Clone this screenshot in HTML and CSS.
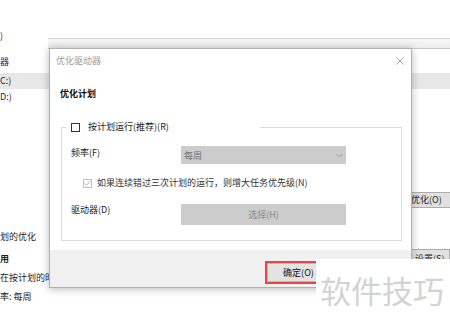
FILE: index.html
```html
<!DOCTYPE html>
<html lang="zh-CN">
<head>
<meta charset="utf-8">
<title>优化驱动器</title>
<link rel="stylesheet" href="styles.css">
</head>
<body>
<div class="app">
  <div class="bg">
    <div class="bg-head"><span class="bg-txt">)</span><div class="hdrbar"></div></div>
    <div class="bg-line l-drv">器</div>
    <div class="bg-sel">C:)</div>
    <div class="bg-line l-d">D:)</div>
    <div class="bg-btnrow"><button class="bg-btn">优化(O)</button></div>
    <div class="bg-line l-sched">划的优化</div>
    <div class="bg-row2"><span class="bg-bold">用</span><button class="bg-btn bg-btn2">设置(S)</button></div>
    <div class="bg-line l-run">在按计划的时间运行</div>
    <div class="bg-line l-freq">率: 每周</div>
  </div>

  <div class="dialog">
    <div class="dlg-title">
      <span class="dlg-title-text">优化驱动器</span>
      <svg class="dlg-close" width="12" height="12" viewBox="0 0 12 12"><path d="M2.5 2.5L9.5 9.5M9.5 2.5L2.5 9.5"/></svg>
    </div>
    <div class="dlg-body">
      <div class="dlg-heading">优化计划</div>
      <fieldset class="group">
        <legend class="group-legend"><span class="cb"></span><span class="cb-label">按计划运行(推荐)(R)</span></legend>
        <div class="group-body">
          <div class="frow frow-freq">
            <span class="flabel flabel-freq">频率(F)</span>
            <div class="select"><span>每周</span><svg class="chev" width="7" height="5" viewBox="0 0 7 5"><path d="M0.5 1L3.5 4L6.5 1"/></svg></div>
          </div>
          <div class="frow frow-check">
            <span class="cb cb-dis"><svg width="9" height="9" viewBox="0 0 9 9"><path d="M1.5 4.5L3.5 6.5L7.5 2"/></svg></span>
            <span class="dis-label">如果连续错过三次计划的运行，则增大任务优先级(N)</span>
          </div>
          <div class="frow frow-drive">
            <span class="flabel">驱动器(D)</span>
            <button class="pick">选择(H)</button>
          </div>
        </div>
      </fieldset>
    </div>
    <div class="dlg-footer">
      <button class="btn btn-ok">确定(O)</button>
    </div>
  </div>

  <div class="watermark">软件技巧</div>
</div>
</body>
</html>
```
FILE: styles.css
```css
* { box-sizing: border-box; }
html, body { margin: 0; padding: 0; }
body {
  width: 450px;
  height: 326px;
  overflow: hidden;
  background: #ffffff;
  font-family: "Noto Sans CJK SC", "Microsoft YaHei", sans-serif;
  font-size: 9px;
  color: #1e1e1e;
}
button { font: inherit; margin: 0; padding: 0; color: inherit; }

.app {
  position: relative;
  width: 450px;
  height: 326px;
  overflow: hidden;
}

/* background window */
.bg { width: 450px; }
.bg-head {
  display: flex;
  margin-top: 30px;
  height: 20px;
}
.bg-txt { line-height: 12px; width: 48px; }
.hdrbar {
  margin-top: 8px;
  height: 11px;
  flex: 1;
  border-top: 1px solid #d3d3d3;
  border-bottom: 1px solid #c9c9c9;
  background: linear-gradient(#f8f8f8, #ebebeb);
}
.bg-line { line-height: 12px; height: 12px; white-space: nowrap; }
.l-drv { margin-top: 6px; }
.bg-sel {
  margin-top: 5px;
  height: 16px;
  line-height: 16px;
  background: #e8e8e8;
}
.l-d { margin-top: 2px; }
.bg-btnrow {
  margin-top: 89px;
  height: 16px;
  padding-left: 404px;
  display: flex;
}
.bg-btn {
  width: 60px;
  height: 16px;
  flex: none;
  border: 1px solid #adadad;
  background: #e1e1e1;
  text-align: left;
  padding-left: 6px;
  line-height: 14px;
  color: #1e1e1e;
}
.l-sched { margin-top: 23px; }
.bg-row2 {
  margin-top: 6px;
  height: 19px;
  display: flex;
  align-items: center;
}
.bg-bold { font-weight: 700; line-height: 12px; }
.bg-btn2 {
  margin-left: auto;
  width: 46px;
  height: 19px;
  padding-left: 10px;
  line-height: 17px;
}
.l-run { margin-top: 4px; }
.l-freq { margin-top: 7px; }

/* dialog (window on top) */
.dialog {
  position: absolute;
  left: 49px;
  top: 48px;
  width: 363px;
  background: #ffffff;
  border: 1px solid #b2b2b2;
  box-shadow: 0 1px 8px rgba(0, 0, 0, 0.28);
}
.dlg-title {
  height: 23px;
  display: flex;
  align-items: center;
  justify-content: space-between;
  padding: 0 5px 0 6px;
}
.dlg-title-text { color: #9a9a9a; line-height: 12px; }
.dlg-close path { stroke: #a3a3a3; stroke-width: 1; fill: none; }

.dlg-body { padding: 0 9px 0 11px; }
.dlg-heading {
  margin-top: 16px;
  margin-left: -1px;
  line-height: 12px;
  font-weight: 700;
  color: #111;
}
.group {
  margin: 21px 0 9px 0;
  padding: 13px 0 15px 4px;
  border: 1px solid #dcdcdc;
  min-width: 0;
  width: 341px;
}
.group-legend {
  display: flex;
  align-items: center;
  height: 12px;
  padding: 0 91px 0 5px;
  line-height: 12px;
}
.cb {
  display: inline-block;
  width: 9px;
  height: 9px;
  flex: none;
  border: 1px solid #333333;
  background: #fff;
}
.cb-label { margin-left: 8px; white-space: nowrap; }
.group-body { padding-left: 5px; }
.frow { display: flex; align-items: flex-start; }
.flabel { width: 110px; flex: none; line-height: 12px; }
.flabel-freq { padding-top: 1px; }
.select {
  width: 165px;
  height: 18px;
  background: #cccccc;
  display: flex;
  align-items: center;
  justify-content: space-between;
  padding: 0 3px 0 3px;
  color: #707070;
}
.chev path { stroke: #9c9c9c; stroke-width: 1; fill: none; }
.frow-check {
  margin-top: 13px;
  padding-left: 12px;
  align-items: center;
  line-height: 12px;
}
.cb-dis {
  border-color: #c2c2c2;
  display: flex;
  align-items: center;
  justify-content: center;
}
.cb-dis svg { display: block; margin: -1px; }
.cb-dis path { stroke: #b5b5b5; stroke-width: 1; fill: none; }
.dis-label { margin-left: 5px; white-space: nowrap; color: #333; }
.frow-drive { margin-top: 15px; }
.pick {
  width: 165px;
  height: 21px;
  border: none;
  background: #cccccc;
  color: #8a8a8a;
  text-align: center;
}

.dlg-footer {
  background: #f0f0f0;
  display: flex;
  justify-content: flex-end;
  padding: 11px 79px 3px 0;
}
.btn {
  width: 67px;
  height: 23px;
  border: 1px solid #adadad;
  background: #e1e1e1;
  text-align: center;
  color: #111;
}
.btn-ok {
  border: 2px solid #e2474a;
  box-shadow: inset 0 0 0 1px #b9b9b9;
  background: #e3e3e3;
}

/* watermark overlay */
.watermark {
  position: absolute;
  left: 316px;
  top: 259px;
  right: 0;
  bottom: 0;
  background: #ffffff;
  color: #d3d3d3;
  font-size: 31px;
  line-height: 31px;
  padding: 15px 0 0 4px;
  white-space: nowrap;
}
```
